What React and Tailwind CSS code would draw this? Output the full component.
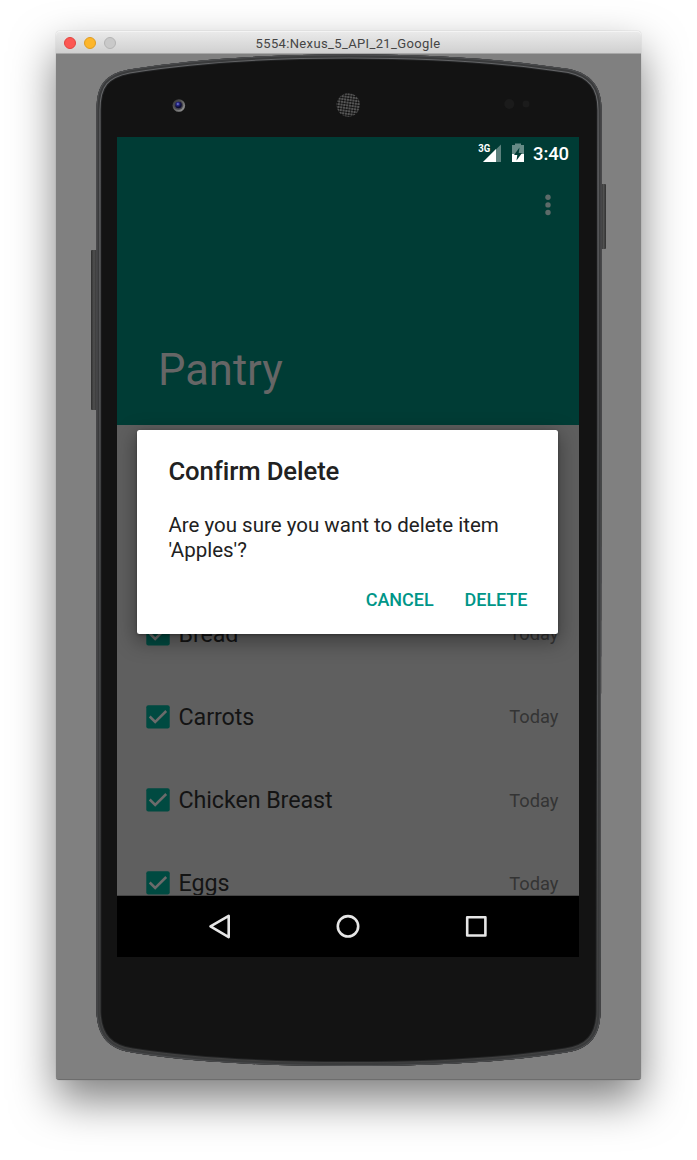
import React from "react";

const ITEMS = ["Bread", "Carrots", "Chicken Breast", "Eggs"];

function TitleBar() {
  return (
    <div className="relative flex h-[23px] shrink-0 items-center justify-center rounded-t-[4px] border-b border-[#a8a8a8] bg-linear-to-b from-[#ebebeb] to-[#d0d0d0] shadow-[inset_0_1px_0_#f4f4f4]">
      <div className="absolute left-2 top-[5.5px] flex gap-2">
        <i className="size-3 rounded-full border border-[#e2443f] bg-[#fc5753]" />
        <i className="size-3 rounded-full border border-[#df9c22] bg-[#fdb62b]" />
        <i className="size-3 rounded-full border border-[#b4b4b4] bg-[#c9c9c9]" />
      </div>
      <span className="pt-[2px] pr-px text-[13px] leading-none whitespace-nowrap tracking-[0.36px] text-[#454545]">
        5554:Nexus_5_API_21_Google
      </span>
    </div>
  );
}

const BODY =
  "M96.500 420 L96.500 110 C96.500 84 106 74 129 69.500 C200 58 275 54.500 349 54.500 C423 54.500 498 58 569 69 C591 74 601.500 86 601.500 110 L601.500 420 L600.500 1012 C600 1038 588 1049 566 1052.500 C500 1063 424 1066 349 1066 C274 1066 198 1063 132 1052.500 C110 1049 97.500 1038 96.500 1012 Z";

function DeviceFrame() {
  return (
    <svg className="absolute inset-0" width="585" height="1026" viewBox="56 54 585 1026" aria-hidden="true">
      <defs>
        <linearGradient id="key" x1="0" x2="1">
          <stop offset="0" stopColor="#2d2d2d" />
          <stop offset=".5" stopColor="#505050" />
          <stop offset="1" stopColor="#303030" />
        </linearGradient>
        <linearGradient id="rim" gradientUnits="userSpaceOnUse" x1="0" y1="55" x2="0" y2="1066">
          <stop offset="0" stopColor="#626365" />
          <stop offset=".12" stopColor="#747578" />
          <stop offset=".6" stopColor="#505254" />
          <stop offset="1" stopColor="#404040" />
        </linearGradient>
        <pattern id="mesh" width="2.8" height="2.8" patternUnits="userSpaceOnUse" patternTransform="rotate(8)">
          <rect width="2.8" height="2.8" fill="#767676" />
          <circle cx="1.4" cy="1.4" r="1.2" fill="#080808" />
        </pattern>
        <radialGradient id="lens" cx=".4" cy=".35">
          <stop offset="0" stopColor="#8d9be0" />
          <stop offset=".4" stopColor="#2b2b90" />
          <stop offset="1" stopColor="#0b0b30" />
        </radialGradient>
        <linearGradient id="ring" x1="0" y1="0" x2="1" y2="1">
          <stop offset="0" stopColor="#2a2a2a" />
          <stop offset="1" stopColor="#a0a0a0" />
        </linearGradient>
        <clipPath id="body"><path d={BODY} /></clipPath>
      </defs>
      <rect x="91" y="250" width="6" height="160" rx="1" fill="url(#key)" />
      <rect x="601" y="184" width="5" height="65" rx="1" fill="url(#key)" />
      <path d={BODY} fill="#131313" />
      <g clipPath="url(#body)" fill="none">
        <path d={BODY} stroke="#222324" strokeWidth="10" />
        <path d={BODY} stroke="url(#rim)" strokeWidth="8" />
        <path d={BODY} stroke="#3a3b3c" strokeWidth="6" />
        <path d={BODY} stroke="#4c4d4f" strokeWidth="2" />
      </g>
      <circle cx="178.8" cy="105.5" r="6.3" fill="url(#ring)" />
      <circle cx="178.5" cy="105.2" r="4.600" fill="#44444c" />
      <circle cx="178.5" cy="105" r="3.300" fill="url(#lens)" />
      <circle cx="348.3" cy="105" r="11.700" fill="url(#mesh)" />
      <circle cx="509.3" cy="104" r="5" fill="#1b1b1b" />
      <circle cx="526" cy="104" r="3.5" fill="#1b1b1b" />
    </svg>
  );
}

function StatusBar() {
  return (
    <div className="flex h-[33px] items-center justify-end pr-[10px] text-white">
      <svg width="52" height="24" viewBox="478 142 52 24" aria-hidden="true">
        <path d="M501 144.500V162H483z" fill="#5c817d" />
        <path d="M496 149V162H483z" fill="#fff" />
        <path d="M515 145v-1.500h6V145h3v17h-12v-17z" fill="#668b87" />
        <path d="M512 154h12v8h-12z" fill="#fff" />
        <path d="M519.500 147.500l-5.500 7.500h3.300l-.8 5.500 5.500-7.500h-3.300z" fill="#003c35" />
        <text x="478.300" y="152" fill="#fff" fontFamily="Roboto, sans-serif" fontWeight="700" fontSize="10.500" textLength="12" lengthAdjust="spacingAndGlyphs">3G</text>
      </svg>
      <span className="ml-[3px] pt-px text-[18.500px] leading-none font-medium tracking-[-0.1px]">3:40</span>
    </div>
  );
}

function Row({ name }) {
  return (
    <li className="flex h-[83.100px] shrink-0 items-center pr-[20.500px] pl-[29px]">
      <svg width="24" height="24" viewBox="0 0 24 24" aria-hidden="true">
        <rect x="0.300" y="0.300" width="23.400" height="23.200" rx="2" fill="#004a41" />
        <path d="M3.700 11.500l5.500 5.500L20.200 6" fill="none" stroke="#6b6b6b" strokeWidth="2.500" />
      </svg>
      <span className="ml-[8.500px] pt-[2px] text-[23.300px] leading-none tracking-[-0.1px] text-[#141414]">{name}</span>
      <span className="ml-auto pt-[2px] text-[18.300px] leading-none text-[#343434]">Today</span>
    </li>
  );
}

function NavBar() {
  return (
    <nav className="flex h-[61.500px] shrink-0 items-center justify-between bg-black px-[89px]">
      <svg width="28" height="28" viewBox="206 912 28 28" fill="none" stroke="#e6e6e6" strokeWidth="2.600" strokeLinejoin="round" aria-hidden="true">
        <path d="M228.700 915.800v21.300l-18.200-10.700z" />
      </svg>
      <svg width="28" height="28" viewBox="0 0 28 28" fill="none" stroke="#e6e6e6" strokeWidth="2.600" aria-hidden="true">
        <circle cx="14" cy="14.300" r="10.200" />
      </svg>
      <svg width="28" height="28" viewBox="0 0 28 28" fill="none" stroke="#e6e6e6" strokeWidth="2.600" strokeLinejoin="round" aria-hidden="true">
        <rect x="5.200" y="5.300" width="18.200" height="18.200" />
      </svg>
    </nav>
  );
}

function Dialog() {
  return (
    <div role="dialog" className="absolute top-[293px] left-[20.400px] h-[204.200px] w-[421px] rounded-[2.500px] bg-white px-[31px] pt-[26px] text-[#212121] shadow-[0_6px_20px_2px_rgba(0,0,0,0.36),0_1px_3px_rgba(0,0,0,0.3)]">
      <h2 className="text-[25.700px] leading-[30px] font-medium tracking-[-0.1px]">Confirm Delete</h2>
      <p className="mt-[27px] text-[20.500px] leading-[24.500px]">
        Are you sure you want to delete item
        <br />
        'Apples'?
      </p>
      <div className="mt-[26px] flex justify-end gap-[31px] text-[18px] leading-6 font-medium tracking-[-0.05px] text-[#009688]">
        <button>CANCEL</button>
        <button>DELETE</button>
      </div>
    </div>
  );
}

export default function App() {
  return (
    <div className="h-[1160px] w-[697px] overflow-hidden bg-white pt-[31px] pl-14 font-['Roboto',sans-serif]">
      <div className="flex h-[1049px] w-[585px] flex-col rounded-[4px] shadow-[0_0_1px_rgba(0,0,0,0.4),0_20px_44px_rgba(0,0,0,0.5)]">
        <TitleBar />
        <div className="relative flex-1 rounded-b-[3px] border-b border-[#6d6d6d] bg-[#808080] pt-[83px] pl-[61px]">
          <DeviceFrame />
          <main className="relative flex h-[820px] w-[462px] flex-col overflow-hidden bg-[#5f5f5f]">
            <header className="flex h-[288px] shrink-0 flex-col bg-[#003c35]">
              <StatusBar />
              <svg className="mt-[22px] mr-[26px] self-end" width="10" height="26" viewBox="0 0 10 26" fill="#5d6b69" aria-hidden="true">
                <circle cx="5" cy="5.200" r="2.700" />
                <circle cx="5" cy="12.900" r="2.700" />
                <circle cx="5" cy="20.500" r="2.700" />
              </svg>
              <h1 className="mt-auto mb-[27px] pl-[41px] text-[43.500px] leading-[54px] text-[#666]">Pantry</h1>
            </header>
            <ul className="flex min-h-0 flex-1 flex-col overflow-hidden border-b border-[#454545] pt-[167px]">
              {ITEMS.map((name) => (
                <Row key={name} name={name} />
              ))}
            </ul>
            <NavBar />
            <Dialog />
          </main>
        </div>
      </div>
    </div>
  );
}
